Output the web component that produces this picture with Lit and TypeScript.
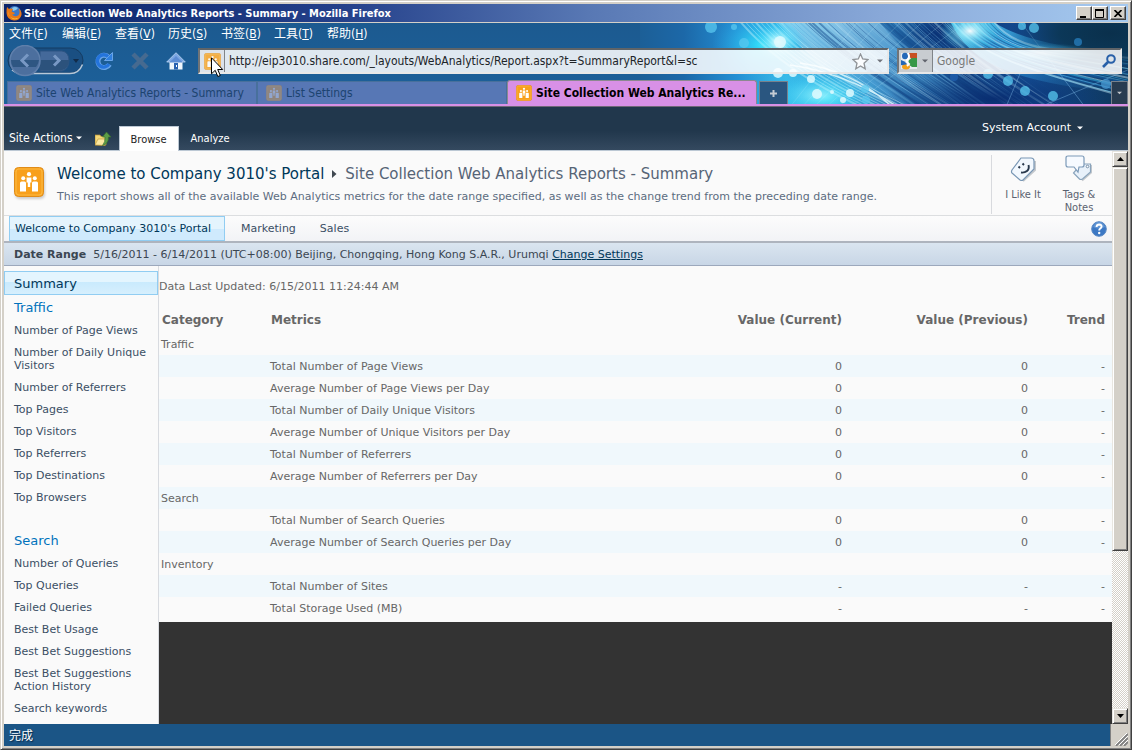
import { LitElement, html, svg, css } from "lit";
import { customElement } from "lit/decorators.js";

type Row = { category?: string; metric?: string; current?: string; previous?: string; trend?: string };

const MENUS: [string, string][] = [
  ["文件", "F"], ["编辑", "E"], ["查看", "V"], ["历史", "S"], ["书签", "B"], ["工具", "T"], ["帮助", "H"],
];

const metric = (name: string, value: string): Row => ({ metric: name, current: value, previous: value, trend: "-" });

const ROWS: Row[] = [
  { category: "Traffic" },
  metric("Total Number of Page Views", "0"),
  metric("Average Number of Page Views per Day", "0"),
  metric("Total Number of Daily Unique Visitors", "0"),
  metric("Average Number of Unique Visitors per Day", "0"),
  metric("Total Number of Referrers", "0"),
  metric("Average Number of Referrers per Day", "0"),
  { category: "Search" },
  metric("Total Number of Search Queries", "0"),
  metric("Average Number of Search Queries per Day", "0"),
  { category: "Inventory" },
  metric("Total Number of Sites", "-"),
  metric("Total Storage Used (MB)", "-"),
];

const TRAFFIC = ["Number of Page Views", "Number of Daily Unique Visitors", "Number of Referrers", "Top Pages",
  "Top Visitors", "Top Referrers", "Top Destinations", "Top Browsers"];
const SEARCH = ["Number of Queries", "Top Queries", "Failed Queries", "Best Bet Usage", "Best Bet Suggestions",
  "Best Bet Suggestions Action History", "Search keywords"];

const siteIcon = (size: number) => html`<svg class="icon" width=${size} height=${size} viewBox="0 0 30 30" aria-hidden="true">
  <rect x="0.5" y="0.5" width="29" height="29" rx="4" fill="#f8a01c" stroke="#e08c18"/>
  <rect x="2" y="2" width="26" height="26" rx="3" fill="none" stroke="#fcb840" stroke-width="1.2"/>
  <g fill="#fff"><circle cx="15" cy="7.2" r="2.1"/><circle cx="9.2" cy="11.200" r="2"/><circle cx="20.8" cy="11.200" r="2"/>
  <path d="M12.600 10.500h4.800v5h-1.200v4.500h-2.400v-4.500h-1.200z"/><path d="M6 16q0-1.500 1.500-1.500h3q1.500 0 1.500 1.500v8.500H6zM18 16q0-1.500 1.500-1.500h3q1.500 0 1.500 1.500v8.500h-6z"/></g></svg>`;

const caret = (color: string, w = 6) => html`<svg width=${w} height="4" viewBox="0 0 6 4" aria-hidden="true"><path d="M0 0.500h6L3 3.500z" fill=${color}/></svg>`;

const range = (n: number) => Array.from({ length: n }, (_, i) => i);

/* Repeatable pseudo-random number in 0..1, so the streaks are uneven but stable. */
const jitter = (i: number) => { const v = Math.sin(i * 12.9898) * 43758.5453; return v - Math.floor(v); };

const themeArt = svg`
  <defs>
    <linearGradient id="base" x1="0" x2="1" y1="0" y2="0">
      <stop offset="0" stop-color="#1c5f97"/><stop offset="0.09" stop-color="#1c68a8"/><stop offset="0.2" stop-color="#2490d4"/>
      <stop offset="0.3" stop-color="#3cbce8"/><stop offset="0.42" stop-color="#4a98cc"/><stop offset="0.55" stop-color="#2068a8"/>
      <stop offset="0.67" stop-color="#123f80"/><stop offset="0.8" stop-color="#134a90"/><stop offset="1" stop-color="#0e3658"/>
    </linearGradient>
    <linearGradient id="ribbonLight" x1="0" x2="1" y1="0" y2="1">
      <stop offset="0" stop-color="#c8ecfa"/><stop offset="0.45" stop-color="#6cb4e0"/><stop offset="1" stop-color="#1c5c9c" stop-opacity="0.4"/>
    </linearGradient>
    <linearGradient id="sweep" x1="0" x2="1" y1="0" y2="0.6">
      <stop offset="0" stop-color="#5cdcfa"/><stop offset="0.5" stop-color="#2c94d8"/><stop offset="1" stop-color="#1c5c98" stop-opacity="0.3"/>
    </linearGradient>
    <radialGradient id="glow"><stop offset="0" stop-color="#fff" stop-opacity="0.95"/><stop offset="0.3" stop-color="#a8f4ff" stop-opacity="0.75"/><stop offset="1" stop-color="#30d0f8" stop-opacity="0"/></radialGradient>
    <radialGradient id="cyan"><stop offset="0" stop-color="#30e4fc" stop-opacity="0.95"/><stop offset="1" stop-color="#28a8e8" stop-opacity="0"/></radialGradient>
    <radialGradient id="navy"><stop offset="0" stop-color="#082c70" stop-opacity="0.95"/><stop offset="1" stop-color="#0c3878" stop-opacity="0"/></radialGradient>
    <radialGradient id="night"><stop offset="0" stop-color="#0a304c"/><stop offset="0.5" stop-color="#0b3654" stop-opacity="0.9"/><stop offset="1" stop-color="#0c385c" stop-opacity="0"/></radialGradient>
  </defs>
  <rect width="488" height="81" fill="url(#base)"/>
  <path d="M138 0H240Q280 50 350 81H236Q190 56 138 0z" fill="url(#ribbonLight)" opacity="0.6"/>
  <ellipse cx="122" cy="22" rx="50" ry="34" fill="url(#cyan)"/>
  <ellipse cx="185" cy="74" rx="70" ry="36" fill="url(#cyan)"/>
  <ellipse cx="300" cy="10" rx="52" ry="30" fill="url(#navy)"/>
  <g fill="none">
    ${range(60).map((i) => { const a = 140 + i * 3 + jitter(i) * 3; return svg`<path d="M${a} -4C${a + 30} 26 ${a + 66 + jitter(i + 7) * 6} 54 ${a + 116 + jitter(i + 3) * 14} 88"
      stroke=${["#b8e2f6", "#1c5494", "#78bce6", "#164c8c", "#4ea0d8"][Math.floor(jitter(i + 11) * 5)]} stroke-width=${jitter(i + 5) > 0.75 ? 2 : 1} opacity=${(i > 36 ? 0.2 : 0.3) + jitter(i + 2) * 0.25}/>`; })}
  </g>
  <ellipse cx="355" cy="76" rx="110" ry="26" fill="url(#navy)"/>
  <path d="M310 -2H352Q390 24 488 30V70Q380 62 340 34 320 20 310 -2z" fill="url(#sweep)" opacity="0.75"/>
  <g fill="none">
    ${range(22).map((i) => { const a = 308 + i * 2 + jitter(i + 20) * 2; return svg`<path d="M${a} -4C${a + 22} 30 ${a + 74} ${48 - i} 500 ${76 - i * 2 + jitter(i) * 4}"
      stroke=${["#40c8f4", "#d0f4ff", "#1460b0", "#68d0f8", "#0c4088"][i % 5]} stroke-width=${jitter(i + 9) > 0.7 ? 2 : 1} opacity="0.45"/>`; })}
    ${range(9).map((i) => svg`<path d="M${98 + i * 5} -4C${128 + i * 5} 32 ${172 + i * 6} 62 ${226 + i * 6} 86" stroke="#d8faff" stroke-width=${i % 3 ? 1 : 2} opacity="0.4"/>`)}
    ${range(6).map((i) => svg`<path d="M${150 + i * 12} 84L${220 + i * 22} -4" stroke="#c0f0ff" opacity="0.2"/>`)}
    <path d="M380 -2L445 84M400 84L490 46M366 84L382 46" stroke="#88c4f0" opacity="0.4"/>
    <path d="M150 42Q206 50 258 84M160 40Q214 48 252 84" stroke="#e8fdff" stroke-width="1.500" opacity="0.8"/>
  </g>
  <ellipse cx="470" cy="10" rx="100" ry="40" fill="url(#night)"/>
  <ellipse cx="138" cy="19" rx="24" ry="20" fill="url(#glow)"/>
  <ellipse cx="330" cy="8" rx="30" ry="20" fill="url(#glow)"/>
  <ellipse cx="400" cy="30" rx="60" ry="10" fill="url(#glow)" opacity="0.5"/>
  <ellipse cx="180" cy="72" rx="46" ry="20" fill="url(#glow)" opacity="0.5"/>
  <g fill="#58c8f0" opacity="0.75">
    <circle cx="71" cy="4" r="6"/><circle cx="94" cy="4" r="3"/><circle cx="104" cy="20" r="5"/><circle cx="382" cy="3" r="4"/>
    <circle cx="394" cy="5" r="5"/><circle cx="438" cy="19" r="4" fill="#2880c0"/><circle cx="466" cy="61" r="5" fill="#4898d0"/>
    <circle cx="348" cy="51" r="5"/><circle cx="368" cy="58" r="5"/><circle cx="385" cy="68" r="5"/><circle cx="413" cy="73" r="5"/>
    <circle cx="314" cy="54" r="4" fill="#2060b0"/><circle cx="225" cy="66" r="4"/><circle cx="226" cy="77" r="4"/>
  </g>
  <g fill="#e0fbff" opacity="0.85"><circle cx="140" cy="19" r="6"/><circle cx="138" cy="50" r="5"/><circle cx="153" cy="50" r="4"/><circle cx="171" cy="56" r="4"/>
    <circle cx="177" cy="71" r="5"/><circle cx="210" cy="70" r="4"/><circle cx="192" cy="69" r="2"/><circle cx="203" cy="77" r="3"/></g>`;

@customElement("app-root")
export class AppRoot extends LitElement {
  static styles = css`
    :host { display: block; height: 100vh; font: 11px/13px "DejaVu Sans", Verdana, sans-serif; color: #676767; }
    * { box-sizing: border-box; }
    svg { display: block; flex: none; }
    button { font: inherit; color: inherit; background: none; border: 0; padding: 0; margin: 0; }
    a { color: inherit; text-decoration: none; }
    .ui { font-family: "DejaVu Sans Condensed", Tahoma, "Noto Sans CJK SC", sans-serif; font-size: 12px; line-height: 16px; }
    .window { height: 100%; display: flex; flex-direction: column; background: #d4d0c8; border: 1px solid; border-color: #d4d0c8 #404040 #404040 #d4d0c8;
      box-shadow: inset 1px 1px #fff, inset -1px -1px #808080; padding: 3px; overflow: hidden; }

    .titlebar { flex: none; height: 18px; display: flex; align-items: center; gap: 2px; padding: 0 2px; color: #fff; margin-bottom: 1px;
      background: linear-gradient(90deg, #0a246a, #24408a 30%, #5878b4 52%, #88a8d8 78%, #a6caf0); }
    .titlebar h1 { flex: 1; margin: 0; padding-top: 1px; font-size: 11px; font-weight: bold; white-space: nowrap; }
    .winbtn { width: 16px; height: 14px; display: grid; place-items: center; background: #d4d0c8; border: 1px solid; border-color: #fff #404040 #404040 #fff; box-shadow: inset -1px -1px #808080; }
    .winbtns { display: flex; }
    .winbtns .close { margin-left: 2px; }

    .chrome { flex: none; position: relative; background: linear-gradient(#1c5a90, #1c619b); }
    .art { position: absolute; right: 0; top: 0; }
    .layer { position: relative; }
    .menus { display: flex; height: 22px; padding-left: 5px; color: #fff; text-shadow: 1px 1px 1px #0a2a48; }
    .menus button { flex: 0 0 53px; text-align: left; line-height: 20px; white-space: nowrap; }
    .nav { display: flex; align-items: center; height: 32px; padding: 0 6px 0 3px; }
    .nav .tool { margin-left: 16px; width: 20px; display: grid; place-items: center; }
    .nav .tool.first { margin-left: 10px; }
    .field { display: flex; align-items: center; height: 26px; border: 2px solid; border-color: #606468 #e8e8e8 #e8e8e8 #707478; background: rgba(255, 255, 255, 0.86); }
    .field input { flex: 1; min-width: 0; height: 20px; border: 0; padding: 0 4px; background: none; font: inherit; color: #202428; outline: 0; }
    .field input::placeholder { color: #787878; opacity: 1; }
    .url { flex: 1; margin: 0 8px 0 12px; }
    .url .site { width: 25px; height: 100%; display: grid; place-items: center; border-right: 1px solid #808488; background: #dce2ea; }
    .url .site .icon { opacity: 0.8; }
    .url .star { margin-right: 8px; }
    .url .drop { margin-right: 4px; }
    .search { flex: 0 0 225px; }
    .search .engine { display: flex; align-items: center; gap: 4px; height: 100%; padding: 0 4px 0 1px; border-right: 1px solid #808488; background: #c8ccd0; }
    .search .go { margin-right: 4px; }
    .tabs { display: flex; align-items: flex-end; height: 27px; padding: 0 0 0 3px; }
    .tab { display: flex; align-items: center; gap: 4px; flex: 0 1 250px; height: 23px; padding-left: 8px; background: rgba(94, 122, 184, 0.9); color: #1c4470; border: 1px solid #48709c; border-bottom: 0; white-space: nowrap; overflow: hidden; }
    .tab .icon { opacity: 0.35; }
    .tab.active { height: 24px; background: #d890e6; color: #000; font-weight: bold; border: 1px solid #8c8890; border-bottom: 0; border-radius: 3px 3px 0 0; }
    .tab.active .icon { opacity: 1; }
    .tabbtn { width: 29px; height: 23px; margin-left: 2px; display: grid; place-items: center; background: #2a5680; border: 1px solid #78818c; border-bottom: 0; }
    .tabbtn.all { width: 17px; margin-left: auto; background: #283c50; }
    .strip { flex: none; height: 3px; background: #d890e6; border-bottom: 1px solid #706878; }
    .cursor { position: absolute; left: 207px; top: 34px; }

    .ribbon { flex: none; display: flex; align-items: flex-end; height: 44px; padding-left: 5px; color: #fff; background: linear-gradient(#21374c 55%, #34495f); border-bottom: 1px solid #bcc8d4; }
    .actions { display: flex; align-items: center; gap: 3px; margin: 0 13px 4px 0; }
    .up { margin: 0 8px 3px 0; }
    .rtab { height: 23px; padding: 1px 12px 0; font-size: 11px; }
    .rtab.on { background: #fff; color: #222; margin-bottom: -1px; height: 25px; width: 60px; border: 1px solid #bcc8d4; border-bottom: 0; padding: 2px 8px 0; }
    .account { display: flex; align-items: center; gap: 6px; margin: 0 45px 16px auto; font: 11px/13px "DejaVu Sans", Verdana, sans-serif; }

    .viewport { flex: 1; min-height: 0; display: flex; }
    .page { flex: 1; min-width: 0; display: flex; flex-direction: column; background: #fafafa; overflow: hidden; }
    .head { flex: none; display: flex; align-items: flex-start; height: 65px; border-bottom: 1px solid #dcdee0; padding: 0 5px 0 10px; }
    .head > .icon { margin: 16px 13px 0 0; filter: drop-shadow(1px 2px 1px #ccc); }
    .titles { flex: 1; min-width: 0; padding-top: 13px; white-space: nowrap; }
    .titles h2 { display: flex; align-items: center; gap: 8px; margin: 0 0 6px; font-size: 15px; line-height: 20px; font-weight: normal; color: #566476; }
    .titles h2 a { color: #003759; }
    .titles p { margin: 0; color: #5c6c80; }
    .social { display: flex; margin-top: 4px; height: 59px; border-left: 1px solid #d8dade; padding-left: 3px; }
    .social button { width: 56px; display: flex; flex-direction: column; align-items: center; justify-content: flex-start; gap: 5px; font-size: 11px; line-height: 13px; padding: 0 6px; color: #5a6270; }
    .topnav { flex: none; display: flex; align-items: center; height: 27px; padding: 0 5px; border-bottom: 2px solid #aeb4be; background: linear-gradient(#fcfcfc, #f2f3f6); color: #3b4f65; }
    .topnav a { padding: 0 12px; line-height: 25px; white-space: nowrap; }
    .topnav a.on { padding: 0 13px 0 5px; margin-right: 4px; color: #003759; border: 1px solid #91cdf2; line-height: 23px; background: linear-gradient(#e4f4fd 50%, #cfeafd 50%); }
    .topnav button { margin-left: auto; }
    .range { flex: none; display: flex; align-items: center; gap: 7px; height: 23px; padding-left: 10px; color: #3b4652; background: linear-gradient(#dae5f0, #c8d6e6); border-bottom: 1px solid #9ca8bc; }
    .range a { color: #003759; text-decoration: underline; }
    .body { flex: 1; min-height: 0; display: flex; }
    .side { flex: 0 0 155px; border-right: 1px solid #d8dbe0; padding-top: 5px; color: #3b4f65; }
    .side a { display: block; padding: 5px 4px 4px 10px; }
    .side a.top { font-size: 13px; line-height: 15px; height: 24px; color: #0072bc; }
    .side a.on { color: #003759; padding: 4px 4px 3px 9px; border: 1px solid #91cdf2; background: linear-gradient(#e4f5fe 45%, #c9eafd 45%, #d6effd); }
    .side .group + .group { margin-top: 20px; }
    .main { flex: 1; min-width: 0; background: #333; }
    .report { background: #fafafa; padding: 14px 0 3px; }
    .report p { margin: 0 0 14px; }
    table { width: 100%; table-layout: fixed; border-collapse: collapse; }
    th, td { height: 22px; padding: 0 4px 0 2px; text-align: left; font-weight: normal; white-space: nowrap; line-height: 13px; }
    th { height: 26px; font-size: 12px; font-weight: bold; padding-left: 3px; }
    .num { text-align: right; }
    tr > :last-child.num { padding-right: 7px; }
    tbody tr:nth-child(even) { background: #f0f8fc; }
    .c1 { width: 109px; } .c3 { width: 150px; } .c4 { width: 186px; } .c5 { width: 80px; }

    .scroll { flex: 0 0 16px; display: flex; flex-direction: column; background: repeating-conic-gradient(#fff 0 25%, #d4d0c8 0 50%) 0 0 / 2px 2px; }
    .scroll button { flex: none; width: 16px; height: 16px; display: grid; place-items: center; }
    .bevel { background: #d4d0c8; border: 1px solid; border-color: #e8e6e0 #404040 #404040 #e8e6e0; box-shadow: inset 1px 1px #fff, inset -1px -1px #808080; }
    .track { flex: 1; }
    .thumb { height: 71%; }
    .status { flex: none; display: flex; height: 22px; background: #1b5586; color: #fff; padding-left: 5px; line-height: 25px; text-shadow: 1px 1px 1px #0a2a48; }
    .grip { margin-left: auto; width: 18px; background: #d4d0c8; border-left: 1px solid #808080; display: flex; align-items: flex-end; justify-content: flex-end; }
  `;

  private link(label: string) {
    return html`<a href="#">${label}</a>`;
  }

  render() {
    return html`<div class="window">
      <header class="titlebar ui">
        <svg width="16" height="16" viewBox="0 0 16 16" aria-hidden="true"><circle cx="8.500" cy="7.500" r="6.500" fill="#3c78c8"/><path d="M6 3q3-2 6 0l-2 2-3 1z" fill="#88c8f0"/>
          <path d="M1 2l2 2q2-1 4 0L5.500 6.500 9 8q-1 2-3 1.500 2 2.500 5 1.500 3-1 2.500-5l-.8-2.500Q16 6 15.500 10 14 15.500 8 15.500 1 15 .5 8 .5 4 1 2z" fill="#e87818"/><path d="M2 6q0 6 6 7.500 4 .5 6-2-3 3.500-7 2.500Q3 12 2 6z" fill="#fcc83c"/></svg>
        <h1>Site Collection Web Analytics Reports - Summary - Mozilla Firefox</h1>
        <div class="winbtns">
          <button class="winbtn" aria-label="Minimize"><svg width="10" height="9"><path d="M1 7h6v2H1z"/></svg></button>
          <button class="winbtn" aria-label="Maximize"><svg width="10" height="9"><path d="M.5 1h8v7.500h-8zM0 1h9" fill="none" stroke="#000"/><path d="M0 0h9v2H0z"/></svg></button>
          <button class="winbtn close" aria-label="Close"><svg width="8" height="7"><path d="M.5 0l7 7M7.500 0l-7 7" stroke="#000" stroke-width="1.700"/></svg></button>
        </div>
      </header>

      <div class="chrome ui">
        <svg class="art" width="488" height="81" viewBox="0 0 488 81" aria-hidden="true">${themeArt}</svg>
        <nav class="menus layer">${MENUS.map(([t, k]) => html`<button>${t}(<u>${k}</u>)</button>`)}</nav>
        <div class="nav layer">
          <svg width="77" height="32" viewBox="0 0 77 32" role="img" aria-label="Back and forward">
            <rect x="1" y="3" width="75" height="25" rx="12.500" fill="#1a4f82" stroke="#153c62"/><path d="M5 25q4 3.500 9 3.500h49q9 0 12.500-9" fill="none" stroke="#b8c8d8" stroke-width="1.500"/>
            <path d="M33 6h22q7 1 7 9.500T55 26H33z" fill="#44699a" stroke="#2c5482"/><path d="M33 15h29q0 9-8 10.500H33z" fill="#2c527c"/>
            <circle cx="18" cy="15.500" r="15" fill="#4c6f9e" stroke="#5f7fab" stroke-width="1.500"/><path d="M4 15h28q-1 5-3 7H6q-2-3-2-7z" fill="#2e5682"/>
            <path d="M21 9.500L15 15.500l6 6M47 10.500l5 5-5 5" fill="none" stroke="#7898c4" stroke-width="3"/><path d="M66 14h6l-3 4z" fill="#122c4a"/></svg>
          <button class="tool first" aria-label="Reload"><svg width="20" height="20" viewBox="0 0 20 20"><path d="M15.500 13.500A6.200 6.200 0 1 1 14 5.500" fill="none" stroke="#68a4e8" stroke-width="5"/><path d="M18.500 1.500v8h-8z" fill="#3080e0" stroke="#68a4e8"/><path d="M15 13A6.200 6.200 0 1 1 14 5.500" fill="none" stroke="#2474dc" stroke-width="3.400"/></svg></button>
          <button class="tool" aria-label="Stop"><svg width="18" height="18" viewBox="0 0 18 18"><path d="M2 2l14 14M16 2L2 16" stroke="#466a90" stroke-width="4.500"/></svg></button>
          <button class="tool" aria-label="Home"><svg width="20" height="18" viewBox="0 0 20 18"><path d="M3.500 9v8.500h13V9L10 3z" fill="#f0f6fc"/><path d="M10 .7L19.300 10h-3.500L10 5 4.200 10H.7z" fill="#7ca8e4" stroke="#c0d8f4" stroke-width=".8"/><path d="M4 9.500L10 4l6 5.500v1H4z" fill="#5c8cd4"/><path d="M8 11h4v6.500H8z" fill="#2860b0"/><path d="M10 13h1v2h-1z" fill="#fff"/></svg></button>
          <div class="field url">
            <span class="site">${siteIcon(17)}</span>
            <input aria-label="Address" value="http://eip3010.share.com/_layouts/WebAnalytics/Report.aspx?t=SummaryReport&amp;l=sc">
            <svg class="star" width="17" height="17" viewBox="0 0 17 17" aria-hidden="true"><path d="M8.500 1l2.200 5 5.300.5-4 3.700 1.200 5.600-4.700-2.900-4.700 2.900L5 10.200 1 6.500 6.300 6z" fill="#fbfdff" stroke="#909498" stroke-width="1.300"/></svg>
            <span class="drop">${caret("#70747c")}</span>
          </div>
          <div class="field search">
            <span class="engine"><svg width="18" height="18" viewBox="0 0 18 18" aria-hidden="true"><path d="M1 1h16v16H1z" fill="#e8ecf0"/><path d="M9 1h8v7h-5q-3-3-3-7z" fill="#c85020"/><path d="M12 6h5v9h-5q-5-3-3-7z" fill="#389848"/><ellipse cx="5" cy="4" rx="3" ry="3.200" fill="#2468b8"/><path d="M1 8q4 1 6 4l-2 2-4-1z" fill="#2468b8"/><ellipse cx="6" cy="15" rx="4" ry="2.400" fill="#f4a018"/><path d="M8 1q2 4 0 6-3 2 1 5l-2 2" fill="none" stroke="#fff" stroke-width="1.800"/></svg>${caret("#60646c")}</span>
            <input aria-label="Search" placeholder="Google">
            <svg class="go" width="14" height="14" viewBox="0 0 14 14" aria-hidden="true"><circle cx="9" cy="5" r="3.800" fill="none" stroke="#2860a8" stroke-width="2"/><path d="M6.500 7.500L1 13" stroke="#2860a8" stroke-width="2.600"/></svg>
          </div>
        </div>
        <div class="tabs layer">
          <button class="tab">${siteIcon(16)}Site Web Analytics Reports - Summary</button>
          <button class="tab">${siteIcon(16)}List Settings</button>
          <button class="tab active">${siteIcon(16)}Site Collection Web Analytics Re...</button>
          <button class="tabbtn" aria-label="New tab"><svg width="9" height="9"><path d="M4.500 1v7M1 4.500h7" stroke="#c4ccd4" stroke-width="2"/></svg></button>
          <button class="tabbtn all" aria-label="All tabs">${caret("#c0c4c8", 5)}</button>
        </div>
        <svg class="cursor" width="13" height="21" viewBox="0 0 13 21" aria-hidden="true"><path d="M.5 .8v16l3.700-3.500 2.600 6.200 2.500-1-2.600-6h5z" fill="#fff" stroke="#000"/></svg>
      </div>
      <div class="strip"></div>

      <div class="ribbon ui">
        <button class="actions">Site Actions ${caret("#fff")}</button>
        <button class="up" aria-label="Navigate up"><svg width="16" height="15" viewBox="0 0 16 15"><path d="M0 3h5l1 1.500h5V13H0z" fill="#f4d878" stroke="#b89030" stroke-width=".7"/><path d="M0 13L3 7h10l-3 6.500z" fill="#fce8a0" stroke="#b89030" stroke-width=".6"/><path d="M11.500 0L16 5h-2.500q0 7-6 8.500Q10.500 10 10 5H7.500z" fill="#5c9c48" stroke="#38702c" stroke-width=".7"/></svg></button>
        <button class="rtab on">Browse</button>
        <button class="rtab">Analyze</button>
        <button class="account">System Account ${caret("#fff")}</button>
      </div>

      <div class="viewport">
        <div class="page">
          <div class="head">
            ${siteIcon(30)}
            <div class="titles">
              <h2><a href="#">Welcome to Company 3010's Portal</a><svg width="5" height="8" aria-hidden="true"><path d="M0 0l4.500 4L0 8z" fill="#404850"/></svg><span>Site Collection Web Analytics Reports - Summary</span></h2>
              <p>This report shows all of the available Web Analytics metrics for the date range specified, as well as the change trend from the preceding date range.</p>
            </div>
            <div class="social ui">
              <button><svg width="28" height="28" viewBox="0 0 28 28" aria-hidden="true"><path d="M14 26L26 15V6" fill="none" stroke="#c4c8cc" stroke-width="2"/><path d="M12 3h10q3 0 3 3v8L14 25q-1 1-3 0L3 18q-1-1 0-3z" fill="#f2f8fe" stroke="#7896b4" stroke-width="1.200"/><path d="M9.500 11.500l1.500 1.500M13.500 8.500l1.500 1.500M19.500 10q1 4-1.500 6t-6 1.500" fill="none" stroke="#28384c" stroke-width="1.900"/></svg>I Like It</button>
              <button><svg width="28" height="28" viewBox="0 0 28 28" aria-hidden="true"><path d="M17 25.500l9-8V10" fill="none" stroke="#c4c8cc" stroke-width="2"/><path d="M16 9h9.500v8l-8 7q-2 1-3 0l-6-6z" fill="#e8f1fa" stroke="#8aa4bc" stroke-width="1.200"/><circle cx="22.500" cy="11.500" r="1.300" fill="#fff" stroke="#7890a8"/><path d="M3 1h14q2 0 2 2v7q0 2-2 2h-3l-1 5-4-5H3q-2 0-2-2V3q0-2 2-2z" fill="#f6faff" stroke="#7c9ab8" stroke-width="1.200"/></svg>Tags &amp; Notes</button>
            </div>
          </div>
          <nav class="topnav">
            <a class="on" href="#">Welcome to Company 3010's Portal</a>${this.link("Marketing")}${this.link("Sales")}
            <button aria-label="Help"><svg width="16" height="16" viewBox="0 0 16 16"><circle cx="8" cy="8" r="7.300" fill="#3c78c4" stroke="#5888c4"/><path d="M2 6q2-5 6-5t6 5q-6 3-12 0z" fill="#78a8e0" opacity=".6"/><path d="M5.500 6q.2-2.500 2.700-2.500 2.500.2 2.400 2.200Q10.400 7 9 7.800q-.8.500-.8 1.700" fill="none" stroke="#fff" stroke-width="1.900"/><circle cx="8.200" cy="12" r="1.200" fill="#fff"/></svg></button>
          </nav>
          <div class="range"><b>Date Range</b><span>5/16/2011 - 6/14/2011 (UTC+08:00) Beijing, Chongqing, Hong Kong S.A.R., Urumqi <a href="#">Change Settings</a></span></div>
          <div class="body">
            <nav class="side">
              <div class="group"><a class="top on" href="#">Summary</a><a class="top" href="#">Traffic</a>${TRAFFIC.map((t) => this.link(t))}</div>
              <div class="group"><a class="top" href="#">Search</a>${SEARCH.map((t) => this.link(t))}</div>
            </nav>
            <main class="main">
              <div class="report">
                <p>Data Last Updated: 6/15/2011 11:24:44 AM</p>
                <table>
                  <colgroup><col class="c1"><col><col class="c3"><col class="c4"><col class="c5"></colgroup>
                  <thead><tr><th>Category</th><th>Metrics</th><th class="num">Value (Current)</th><th class="num">Value (Previous)</th><th class="num">Trend</th></tr></thead>
                  <tbody>${ROWS.map((r) => html`<tr><td>${r.category}</td><td>${r.metric}</td><td class="num">${r.current}</td><td class="num">${r.previous}</td><td class="num">${r.trend}</td></tr>`)}</tbody>
                </table>
              </div>
            </main>
          </div>
        </div>
        <div class="scroll">
          <button class="bevel" aria-label="Scroll up"><svg width="7" height="4"><path d="M0 4L3.500 0 7 4z"/></svg></button>
          <div class="track"><div class="thumb bevel"></div></div>
          <button class="bevel" aria-label="Scroll down"><svg width="7" height="4"><path d="M0 0l3.500 4L7 0z"/></svg></button>
        </div>
      </div>
      <footer class="status ui">完成<span class="grip"><svg width="13" height="13" aria-hidden="true"><path d="M1 13L13 1M5 13l8-8M9 13l4-4" stroke="#808080" stroke-width="1.800"/><path d="M0 12L12 0M4 12l9-9M8 12l5-5" stroke="#fff"/></svg></span></footer>
    </div>`;
  }
}
